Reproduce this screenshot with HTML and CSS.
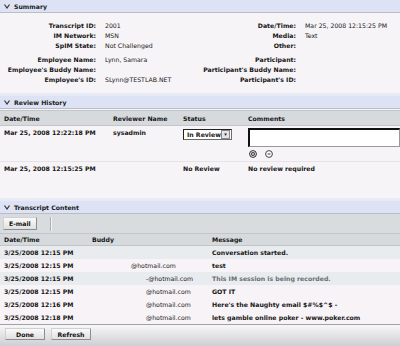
FILE: index.html
```html
<!DOCTYPE html>
<html lang="en">

<head>
    <meta charset="UTF-8">
    <title>Transcript Review</title>
    <link rel="stylesheet" href="styles.css">
</head>

<body>

<!-- Summary -->
<div class="section-head">
    <svg class="arrow" width="6" height="5" viewBox="0 0 6 5"><path d="M0.5 0.5 L3 4 L5.5 0.5" fill="none" stroke="#333" stroke-width="1.2"/></svg>
    Summary
</div>
<div class="summary">
    <div class="summary-group">
        <span class="label">Transcript ID:</span><span class="value">2001</span>
        <span class="label">Date/Time:</span><span class="value">Mar 25, 2008 12:15:25 PM</span>
        <span class="label">IM Network:</span><span class="value">MSN</span>
        <span class="label">Media:</span><span class="value">Text</span>
        <span class="label">SpIM State:</span><span class="value">Not Challenged</span>
        <span class="label">Other:</span><span class="value"></span>
    </div>
    <div class="summary-group">
        <span class="label">Employee Name:</span><span class="value">Lynn, Samara</span>
        <span class="label">Participant:</span><span class="value"></span>
        <span class="label">Employee's Buddy Name:</span><span class="value"></span>
        <span class="label">Participant's Buddy Name:</span><span class="value"></span>
        <span class="label">Employee's ID:</span><span class="value">SLynn@TESTLAB.NET</span>
        <span class="label">Participant's ID:</span><span class="value"></span>
    </div>
</div>

<!-- Review History -->
<div class="section-head">
    <svg class="arrow" width="6" height="5" viewBox="0 0 6 5"><path d="M0.5 0.5 L3 4 L5.5 0.5" fill="none" stroke="#333" stroke-width="1.2"/></svg>
    Review History
</div>
<table class="review">
    <thead>
    <tr>
        <th class="c-date">Date/Time</th>
        <th class="c-reviewer">Reviewer Name</th>
        <th class="c-status">Status</th>
        <th>Comments</th>
    </tr>
    </thead>
    <tbody>
    <tr class="review-open">
        <td>Mar 25, 2008 12:22:18 PM</td>
        <td>sysadmin</td>
        <td>
            <div class="select">In Review <span class="select-btn">&#9662;</span></div>
        </td>
        <td class="comment-cell">
            <div class="comment-box"></div>
            <div class="comment-icons">
                <svg width="8" height="8" viewBox="0 0 8 8"><circle cx="4" cy="4" r="3.4" fill="#fff" stroke="#222" stroke-width="1"/><circle cx="4" cy="4" r="2" fill="#222"/><path d="M4 2.8 V5.2 M2.8 4 H5.2" stroke="#fff" stroke-width="0.8"/></svg>
                <svg width="8" height="8" viewBox="0 0 8 8"><circle cx="4" cy="4" r="3.4" fill="#fff" stroke="#444" stroke-width="1"/><path d="M2.6 4 H5.4" stroke="#333" stroke-width="1"/></svg>
            </div>
        </td>
    </tr>
    <tr class="review-closed">
        <td>Mar 25, 2008 12:15:25 PM</td>
        <td></td>
        <td>No Review</td>
        <td>No review required</td>
    </tr>
    </tbody>
</table>

<!-- Transcript Content -->
<div class="section-head">
    <svg class="arrow" width="6" height="5" viewBox="0 0 6 5"><path d="M0.5 0.5 L3 4 L5.5 0.5" fill="none" stroke="#333" stroke-width="1.2"/></svg>
    Transcript Content
</div>
<div class="toolbar">
    <button class="btn">E-mail</button>
    <span class="toolbar-sep"></span>
</div>
<table class="transcript">
    <thead>
    <tr>
        <th class="t-date">Date/Time</th>
        <th class="t-buddy">Buddy</th>
        <th>Message</th>
    </tr>
    </thead>
    <tbody>
    <tr class="odd">
        <td>3/25/2008 12:15 PM</td>
        <td></td>
        <td>Conversation started.</td>
    </tr>
    <tr class="even">
        <td>3/25/2008 12:15 PM</td>
        <td><span class="buddy near">@hotmail.com</span></td>
        <td>test</td>
    </tr>
    <tr class="odd">
        <td>3/25/2008 12:15 PM</td>
        <td><span class="buddy">-@hotmail.com</span></td>
        <td class="system">This IM session is being recorded.</td>
    </tr>
    <tr class="even">
        <td>3/25/2008 12:15 PM</td>
        <td><span class="buddy">@hotmail.com</span></td>
        <td>GOT IT</td>
    </tr>
    <tr class="even">
        <td>3/25/2008 12:16 PM</td>
        <td><span class="buddy">@hotmail.com</span></td>
        <td>Here's the Naughty email $#%$^$ -</td>
    </tr>
    <tr class="even">
        <td>3/25/2008 12:18 PM</td>
        <td><span class="buddy">@hotmail.com</span></td>
        <td>lets gamble online poker - www.poker.com</td>
    </tr>
    </tbody>
</table>

<div class="footer">
    <button class="btn btn-wide">Done</button>
    <button class="btn btn-wide">Refresh</button>
</div>

</body>
</html>
```

FILE: styles.css
```css
body {
    margin: 0;
    width: 400px;
    height: 346px;
    overflow: hidden;
    background-color: #f6f4f6;
    font-family: "DejaVu Sans", Verdana, sans-serif;
    font-size: 6.2px;
    color: #161616;
}
.section-head {
    display: flex;
    align-items: center;
    gap: 4px;
    height: 12px;
    padding-left: 4px;
    background-color: #dde3f4;
    border-bottom: 1px solid #b8bdc8;
    font-weight: bold;
    color: #1a1a1a;
}
.arrow {
    display: block;
}
.summary {
    padding: 7px 0 9px 0;
    display: flex;
    flex-direction: column;
    gap: 4px;
    border-bottom: 3px solid #e8ebf6;
}
.summary-group {
    display: grid;
    grid-template-columns: 96px 86px 96px 1fr;
    column-gap: 9px;
    grid-auto-rows: 10px;
    align-items: center;
}
.label {
    text-align: right;
    font-weight: bold;
    white-space: nowrap;
}
.value {
    white-space: nowrap;
}
table {
    width: 100%;
    border-collapse: collapse;
}
th {
    text-align: left;
    font-weight: bold;
    background-color: #d6dadd;
    border-top: 1px solid #c2c6cb;
    border-bottom: 1px solid #c2c6cb;
    padding: 0 0 0 4px;
    height: 14px;
    white-space: nowrap;
}
td {
    padding: 0 0 0 4px;
    white-space: nowrap;
    vertical-align: top;
}
.review {
    margin-top: 1px;
    border-bottom: 3px solid #e8ebf6;
}
.review .c-date {
    width: 105px;
}
.review .c-reviewer {
    width: 66px;
}
.review .c-status {
    width: 61px;
}
.review-open td {
    height: 32px;
    padding-top: 3px;
    border-bottom: 1px solid #e6e2e6;
    font-weight: bold;
}
.review-open td.comment-cell {
    padding-top: 2px;
    padding-right: 0;
}
.review-closed td {
    height: 33px;
    padding-top: 3px;
    font-weight: bold;
}
.select {
    display: flex;
    align-items: center;
    justify-content: space-between;
    width: 44px;
    height: 9px;
    padding-left: 3px;
    background: #fff;
    border: 1px solid #6d6d6d;
    border-top-color: #222;
    border-left-color: #222;
    font-weight: bold;
}
.select-btn {
    width: 8px;
    height: 7px;
    margin-right: 1px;
    background: #e4e4e4;
    border: 1px solid #888;
    font-size: 5px;
    line-height: 7px;
    text-align: center;
}
.comment-box {
    height: 16px;
    background: #fff;
    border: 1px solid #999;
    border-top: 2px solid #111;
    border-left: 2px solid #111;
}
.comment-icons {
    display: flex;
    gap: 8px;
    padding: 3px 0 0 1px;
}
.comment-icons svg {
    display: block;
}
.toolbar {
    display: flex;
    align-items: center;
    gap: 13px;
    height: 19px;
    padding-left: 3px;
    background-color: #d9dcdf;
}
.toolbar-sep {
    width: 1px;
    height: 14px;
    background: #a9aeb4;
    border-right: 1px solid #f4f4f4;
}
.btn {
    height: 13px;
    padding: 0 5px;
    font-family: "DejaVu Sans", Verdana, sans-serif;
    font-size: 6.2px;
    font-weight: bold;
    color: #111;
    background: linear-gradient(#fafafa, #e0e0e0);
    border: 1px solid #8d8d8d;
    border-top-color: #d0d0d0;
    border-left-color: #d0d0d0;
    border-radius: 1px;
    cursor: pointer;
}
.transcript th {
    height: 11px;
}
.transcript .t-date {
    width: 84px;
}
.transcript .t-buddy {
    width: 116px;
}
.transcript td {
    height: 13px;
    vertical-align: middle;
    font-weight: bold;
}
.transcript tr.odd td {
    background-color: #e9ecef;
}
.transcript tr.even td {
    background-color: #f8f3f6;
}
.transcript tbody tr:last-child td {
    border-bottom: 1px solid #9ea2a8;
}
.buddy {
    display: inline-block;
    padding-left: 54px;
    font-weight: normal;
}
.buddy.near {
    padding-left: 39px;
}
.system {
    color: #6a6d72;
    font-weight: normal;
}
.footer {
    display: flex;
    gap: 6px;
    height: 23px;
    padding: 3px 0 0 5px;
    box-sizing: border-box;
    background: linear-gradient(#f7f7f8, #d4d4d8 80%, #c6c9d8);
}
.btn-wide {
    width: 40px;
    height: 12px;
}
```
